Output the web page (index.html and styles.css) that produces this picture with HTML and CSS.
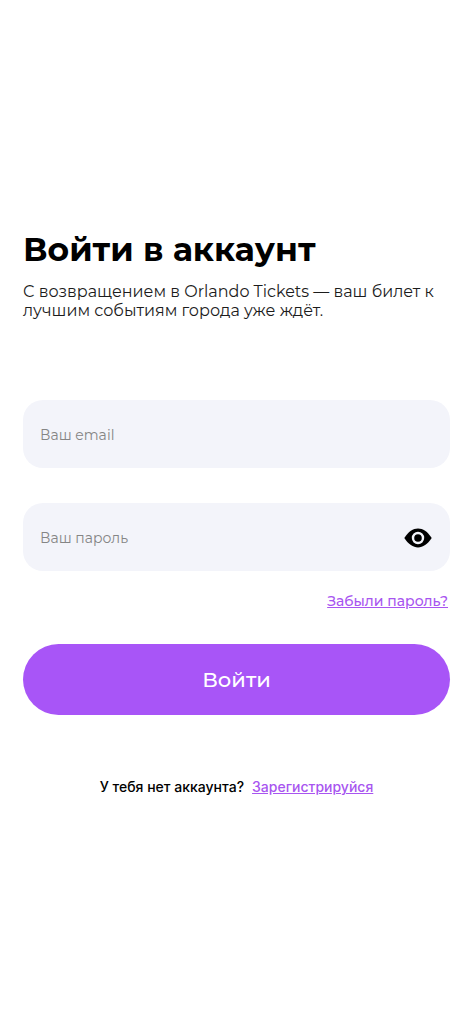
FILE: index.html
```html
<!DOCTYPE html>
<html lang="ru">
<head>
<meta charset="utf-8">
<meta name="viewport" content="width=device-width, initial-scale=1">
<title>Войти в аккаунт</title>
<link rel="stylesheet" href="styles.css">
</head>
<body>
<main class="login">
  <header class="intro">
    <h1 class="title">Войти в аккаунт</h1>
    <p class="subtitle">С возвращением в Orlando Tickets — ваш билет к лучшим событиям города уже ждёт.</p>
  </header>
  <form class="form">
    <div class="field">
      <input class="input" type="email" placeholder="Ваш email" aria-label="Ваш email">
    </div>
    <div class="field">
      <input class="input" type="password" placeholder="Ваш пароль" aria-label="Ваш пароль">
      <button class="toggle" type="button" aria-label="Показать пароль">
        <svg class="eye" viewBox="0 0 28 20" aria-hidden="true">
          <path d="M0.3 10C4.6 3.6 9 0.6 14 0.6S23.4 3.6 27.7 10C23.4 16.4 19 19.4 14 19.4S4.6 16.4 0.3 10Z"/>
          <circle class="eye-ring" cx="14" cy="10" r="5"/>
        </svg>
      </button>
    </div>
    <a class="link forgot" href="#">Забыли пароль?</a>
    <button class="submit" type="submit">Войти</button>
  </form>
  <p class="signup">У тебя нет аккаунта? <a class="link" href="#">Зарегистрируйся</a></p>
</main>
</body>
</html>
```
FILE: styles.css
```css
* {
  box-sizing: border-box;
}

body {
  margin: 0;
  background: #fff;
  color: #000;
  font-family: Montserrat, "Open Sans", sans-serif;
}

.login {
  display: flex;
  flex-direction: column;
  min-height: 100vh;
  padding: 228px 23px 24px;
}

.title {
  margin: 0;
  font: 700 33px/42px Montserrat, "Open Sans", sans-serif;
}

.subtitle {
  margin: 12px 0 0;
  color: #1c1c1c;
  font-size: 16px;
  line-height: 19px;
}

.form {
  display: flex;
  flex-direction: column;
  margin-top: 80px;
}

.field {
  display: flex;
  align-items: center;
  height: 68px;
  padding: 0 18px 0 17px;
  border-radius: 20px;
  background: #f3f4fa;
}

.field + .field {
  margin-top: 35px;
}

.input {
  flex: 1;
  min-width: 0;
  height: 100%;
  padding: 2px 0 0;
  border: 0;
  outline: 0;
  background: transparent;
  color: #000;
  font: 14px Montserrat, "Open Sans", sans-serif;
}

.input::placeholder {
  color: #858585;
}

.toggle {
  display: flex;
  padding: 2px 0 0;
  border: 0;
  background: none;
  cursor: pointer;
}

.eye {
  width: 28px;
  height: 20px;
}

.eye-ring {
  fill: #000;
  stroke: #f3f4fa;
  stroke-width: 2.4;
}

.link {
  color: #a855f0;
  text-decoration: underline;
}

.forgot {
  align-self: flex-end;
  margin-top: 20px;
  padding-right: 2px;
  font-size: 14px;
  font-weight: 500;
  line-height: 20px;
}

.submit {
  height: 71px;
  margin-top: 33px;
  border: 0;
  border-radius: 36px;
  background: #a855f7;
  color: #fff;
  font: 500 21px Montserrat, "Open Sans", sans-serif;
  cursor: pointer;
}

.signup {
  display: flex;
  flex-wrap: wrap;
  justify-content: center;
  column-gap: 8px;
  margin: 62px 0 0;
  font: 500 14px/20px Inter, sans-serif;
}
```
